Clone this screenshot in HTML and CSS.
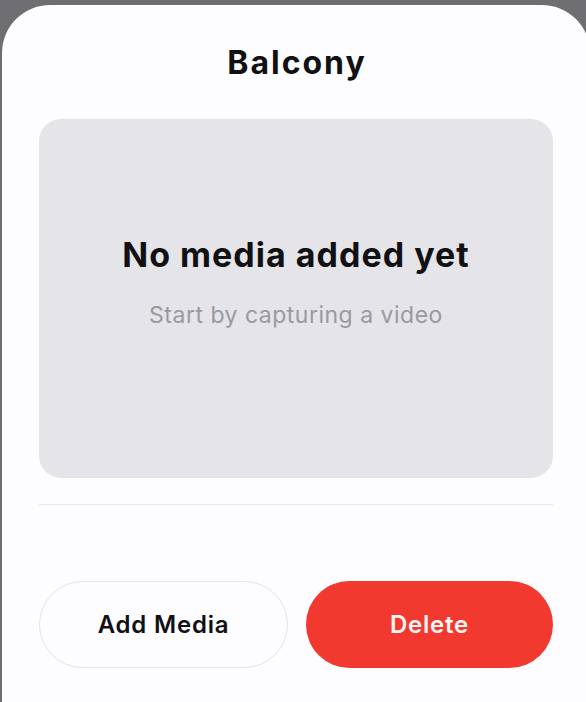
FILE: index.html
```html
<!DOCTYPE html>
<html lang="en">
<head>
<meta charset="utf-8">
<title>Balcony</title>
<link rel="stylesheet" href="styles.css">
</head>
<body>
<div class="sheet">
  <h1 class="title">Balcony</h1>
  <div class="media-card">
    <div class="empty-title">No media added yet</div>
    <div class="empty-sub">Start by capturing a video</div>
  </div>
  <div class="divider"></div>
  <div class="actions">
    <button class="btn btn-secondary">Add Media</button>
    <button class="btn btn-danger">Delete</button>
  </div>
</div>
</body>
</html>
```

FILE: styles.css
```css
html, body {
  margin: 0;
  padding: 0;
  height: 100%;
  overflow: hidden;
}
body {
  background: #6e6d72;
  font-family: Inter, "Noto Sans", "Liberation Sans", sans-serif;
  padding-top: 5px;
  box-sizing: border-box;
}
.sheet {
  margin-left: 2px;
  width: 588px;
  height: 720px;
  background: #fdfdff;
  border-radius: 48px 48px 0 0;
  padding: 39px 37px 0 37px;
  box-sizing: border-box;
  display: flex;
  flex-direction: column;
}
.title {
  margin: 0;
  font-size: 32px;
  line-height: 38px;
  font-weight: 700;
  color: #111113;
  text-align: center;
  letter-spacing: 2px;
  text-indent: 2px;
}
.media-card {
  margin-top: 37px;
  height: 359px;
  background: #e5e4e9;
  border-radius: 22px;
  box-sizing: border-box;
  padding-top: 116px;
  display: flex;
  flex-direction: column;
  align-items: center;
}
.empty-title {
  font-size: 34px;
  line-height: 40px;
  font-weight: 700;
  color: #111113;
  letter-spacing: 1px;
}
.empty-sub {
  margin-top: 26px;
  font-size: 23px;
  line-height: 28px;
  font-weight: 400;
  color: #9a999f;
  letter-spacing: 0.5px;
}
.divider {
  margin-top: 26px;
  height: 1px;
  background: #e6e6eb;
}
.actions {
  margin-top: 76px;
  display: flex;
  gap: 18px;
}
.btn {
  flex: 1;
  height: 87px;
  border-radius: 44px;
  font-family: inherit;
  font-size: 24px;
  font-weight: 600;
  letter-spacing: 0.8px;
  padding: 0;
}
.btn-secondary {
  background: #fdfdff;
  border: 1.5px solid #e3e3e8;
  color: #111113;
}
.btn-danger {
  background: #f2392f;
  border: none;
  color: #fff5f3;
}
```
